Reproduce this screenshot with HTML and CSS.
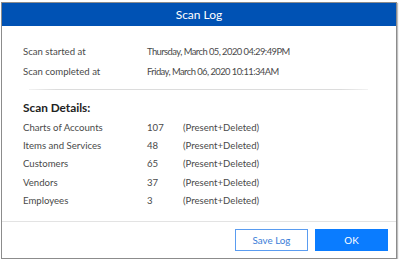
FILE: index.html
```html
<!DOCTYPE html>
<html lang="en">
<head>
    <meta charset="UTF-8">
    <title>Scan Log</title>
    <link rel="stylesheet" href="styles.css">
</head>
<body>
    <div class="dialog">
        <div class="title-bar">Scan Log</div>
        <div class="content">
            <div class="info">
                <span>Scan started at</span>
                <span class="date">Thursday, March 05, 2020 04:29:49PM</span>
                <span>Scan completed at</span>
                <span class="date">Friday, March 06, 2020 10:11:34AM</span>
            </div>
            <div class="divider"></div>
            <h3 class="section-title">Scan Details:</h3>
            <div class="details">
                <span>Charts of Accounts</span><span>107</span><span>(Present+Deleted)</span>
                <span>Items and Services</span><span>48</span><span>(Present+Deleted)</span>
                <span>Customers</span><span>65</span><span>(Present+Deleted)</span>
                <span>Vendors</span><span>37</span><span>(Present+Deleted)</span>
                <span>Employees</span><span>3</span><span>(Present+Deleted)</span>
            </div>
        </div>
        <div class="footer">
            <button class="btn btn-outline">Save Log</button>
            <button class="btn btn-primary">OK</button>
        </div>
    </div>
</body>
</html>
```

FILE: styles.css
```css
:root {
    --title: #0052b4;
    --text: #4a4a4a;
    --border: #8c8c8c;
    --primary: #0a7cff;
    --outline: #5a9cf0;
}
body {
    margin: 0;
    background: #fff;
    font-family: Lato, 'Open Sans', Arial, sans-serif;
    color: var(--text);
}
.dialog {
    margin: 2px 0 0 1px;
    width: 396px;
    height: 257px;
    box-sizing: border-box;
    border: 1px solid var(--border);
    box-shadow: 1px 1px 1px rgba(0,0,0,0.25);
    display: flex;
    flex-direction: column;
}
.title-bar {
    background: var(--title);
    color: #fff;
    height: 23px;
    line-height: 23px;
    text-align: center;
    font-size: 12px;
    flex-shrink: 0;
}
.content {
    flex: 1;
    padding: 15px 0 0 21px;
    font-size: 9.6px;
}
.info {
    display: grid;
    grid-template-columns: 124px auto;
    grid-auto-rows: 20px;
    align-items: center;
}
.date {
    font-size: 9.4px;
    letter-spacing: -0.55px;
}
.divider {
    height: 1px;
    margin: 8px 28px 0 6px;
    background: linear-gradient(to right, #f2f2f2, #dcdcdc 8%, #dcdcdc 92%, #f2f2f2);
}
.section-title {
    margin: 9px 0 0;
    font-size: 11.8px;
    font-weight: bold;
    color: #222;
    line-height: 18px;
}
.details {
    display: grid;
    grid-template-columns: 124px 36px auto;
    grid-auto-rows: 18.4px;
    align-items: center;
    margin-top: 1px;
}
.footer {
    border-top: 1px solid #e3e3e3;
    height: 37px;
    box-sizing: border-box;
    display: flex;
    justify-content: flex-end;
    align-items: center;
    gap: 7px;
    padding-right: 8px;
}
.btn {
    width: 73px;
    height: 22px;
    font-family: inherit;
    font-size: 9.8px;
    cursor: pointer;
    padding: 0;
}
.btn-outline {
    background: #fff;
    border: 1px solid var(--outline);
    color: #3a7dd8;
}
.btn-primary {
    background: var(--primary);
    border: 1px solid var(--primary);
    color: #fff;
}
```
